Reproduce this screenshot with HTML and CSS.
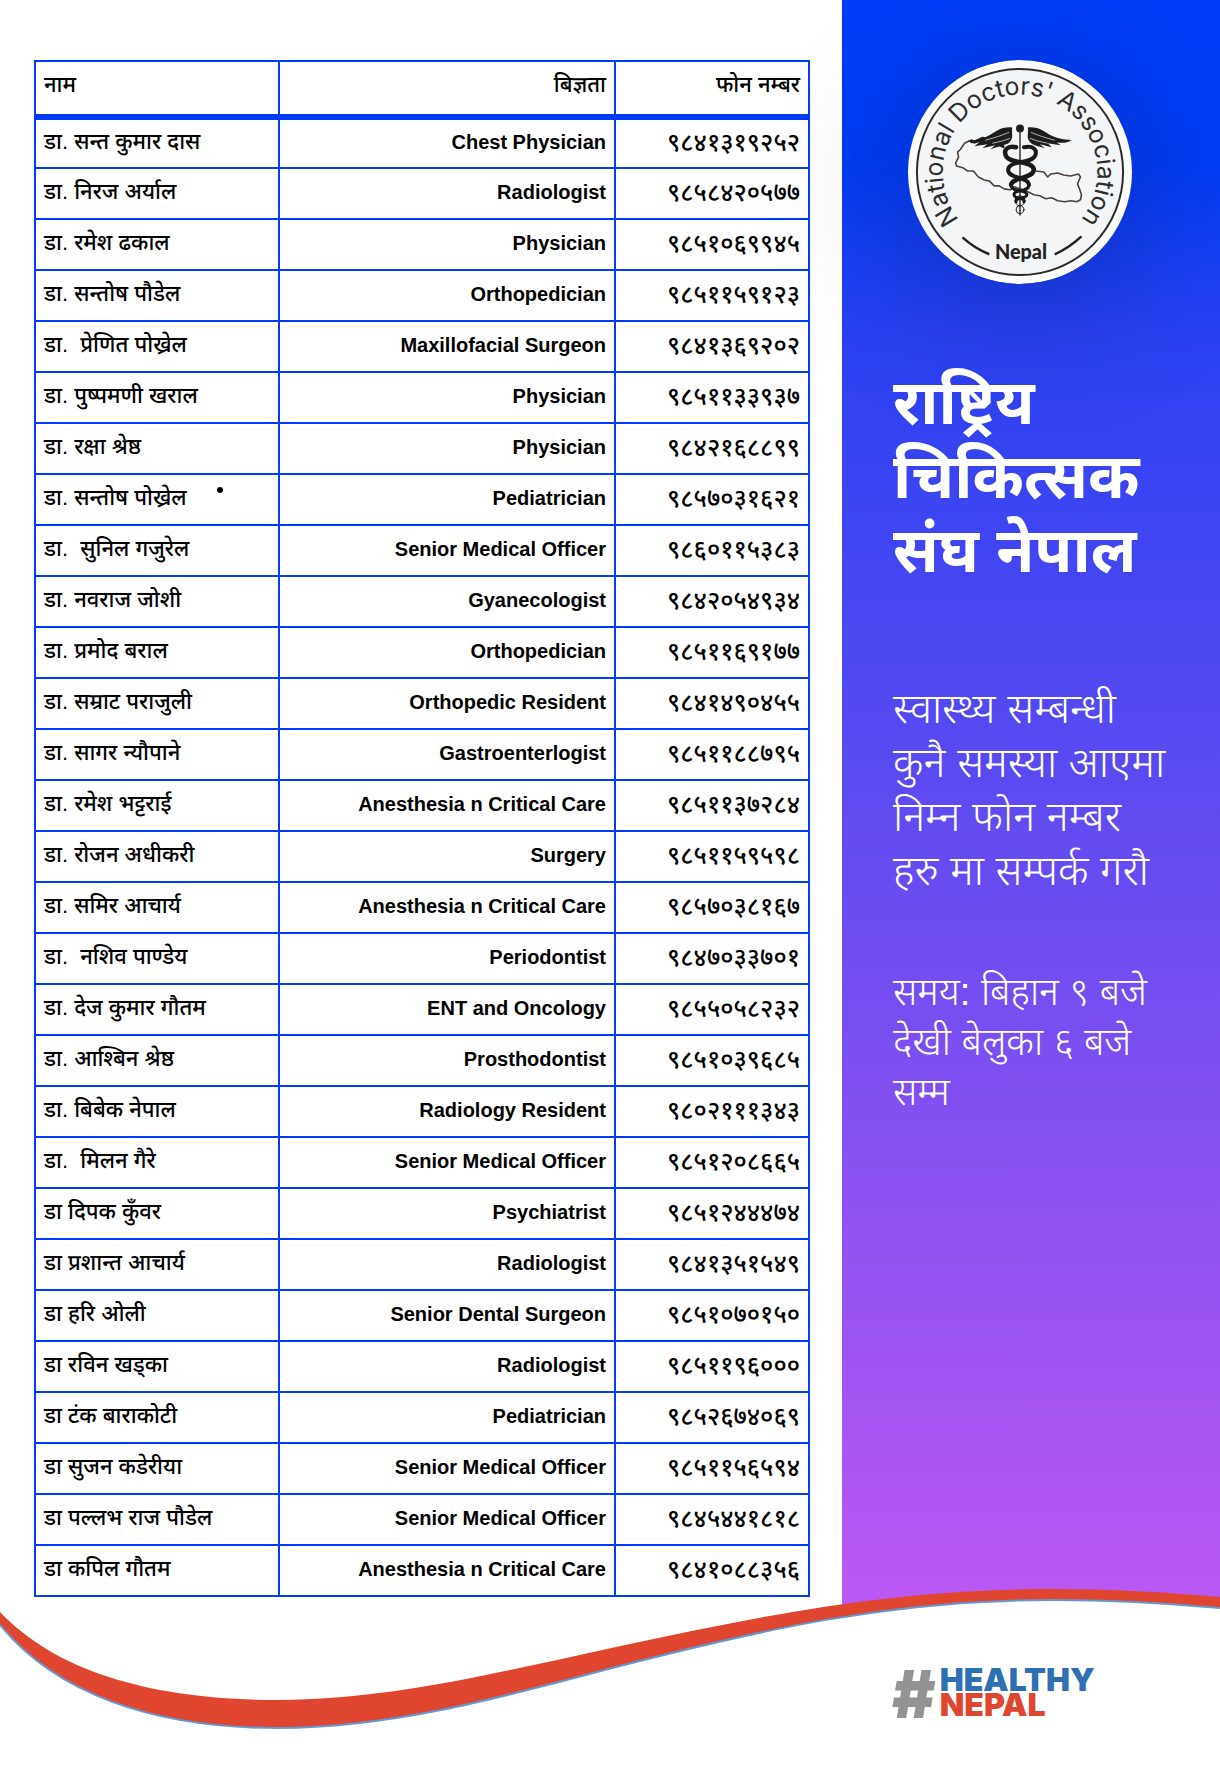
FILE: index.html
```html
<!DOCTYPE html>
<html lang="hi">
<head>
<meta charset="utf-8">
<meta name="viewport" content="width=device-width, initial-scale=1">
<title>राष्ट्रिय चिकित्सक संघ नेपाल</title>
<link rel="stylesheet" href="styles.css">
</head>
<body>
<div class="poster">
  <main class="directory">
    <table class="doctors">
      <colgroup><col class="col-name"><col><col class="col-phone"></colgroup>
      <thead>
        <tr><th scope="col">नाम</th><th scope="col">बिज्ञता</th><th scope="col">फोन नम्बर</th></tr>
      </thead>
      <tbody>
        <tr><td>डा. सन्त कुमार दास</td><td>Chest Physician</td><td>९८४१३१९२५२</td></tr>
        <tr><td>डा. निरज अर्याल</td><td>Radiologist</td><td>९८५८४२०५७७</td></tr>
        <tr><td>डा. रमेश ढकाल</td><td>Physician</td><td>९८५१०६९९४५</td></tr>
        <tr><td>डा. सन्तोष पौडेल</td><td>Orthopedician</td><td>९८५११५९१२३</td></tr>
        <tr><td>डा.&nbsp; प्रेणित पोख्रेल</td><td>Maxillofacial Surgeon</td><td>९८४१३६९२०२</td></tr>
        <tr><td>डा. पुष्पमणी खराल</td><td>Physician</td><td>९८५११३३९३७</td></tr>
        <tr><td>डा. रक्षा श्रेष्ठ</td><td>Physician</td><td>९८४२१६८८९९</td></tr>
        <tr><td>डा. सन्तोष पोख्रेल<span class="dot"></span></td><td>Pediatrician</td><td>९८५७०३१६२१</td></tr>
        <tr><td>डा.&nbsp; सुनिल गजुरेल</td><td>Senior Medical Officer</td><td>९८६०११५३८३</td></tr>
        <tr><td>डा. नवराज जोशी</td><td>Gyanecologist</td><td>९८४२०५४९३४</td></tr>
        <tr><td>डा. प्रमोद बराल</td><td>Orthopedician</td><td>९८५११६९१७७</td></tr>
        <tr><td>डा. सम्राट पराजुली</td><td>Orthopedic Resident</td><td>९८४१४९०४५५</td></tr>
        <tr><td>डा. सागर न्यौपाने</td><td>Gastroenterlogist</td><td>९८५११८८७९५</td></tr>
        <tr><td>डा. रमेश भट्टराई</td><td>Anesthesia n Critical Care</td><td>९८५११३७२८४</td></tr>
        <tr><td>डा. रोजन अधीकरी</td><td>Surgery</td><td>९८५११५९५९८</td></tr>
        <tr><td>डा. समिर आचार्य</td><td>Anesthesia n Critical Care</td><td>९८५७०३८१६७</td></tr>
        <tr><td>डा.&nbsp; नशिव पाण्डेय</td><td>Periodontist</td><td>९८४७०३३७०१</td></tr>
        <tr><td>डा. देज कुमार गौतम</td><td>ENT and Oncology</td><td>९८५५०५८२३२</td></tr>
        <tr><td>डा. आश्बिन श्रेष्ठ</td><td>Prosthodontist</td><td>९८५१०३९६८५</td></tr>
        <tr><td>डा. बिबेक नेपाल</td><td>Radiology Resident</td><td>९८०२१११३४३</td></tr>
        <tr><td>डा.&nbsp; मिलन गैरे</td><td>Senior Medical Officer</td><td>९८५१२०८६६५</td></tr>
        <tr><td>डा दिपक कुँवर</td><td>Psychiatrist</td><td>९८५१२४४४७४</td></tr>
        <tr><td>डा प्रशान्त आचार्य</td><td>Radiologist</td><td>९८४१३५१५४९</td></tr>
        <tr><td>डा हरि ओली</td><td>Senior Dental Surgeon</td><td>९८५१०७०१५०</td></tr>
        <tr><td>डा रविन खड्का</td><td>Radiologist</td><td>९८५११९६०००</td></tr>
        <tr><td>डा टंक बाराकोटी</td><td>Pediatrician</td><td>९८५२६७४०६९</td></tr>
        <tr><td>डा सुजन कडेरीया</td><td>Senior Medical Officer</td><td>९८५११५६५९४</td></tr>
        <tr><td>डा पल्लभ राज पौडेल</td><td>Senior Medical Officer</td><td>९८४५४४१८१८</td></tr>
        <tr><td>डा कपिल गौतम</td><td>Anesthesia n Critical Care</td><td>९८४१०८८३५६</td></tr>
      </tbody>
    </table>
  </main>

  <aside class="sidebar">
    <svg class="seal" viewBox="0 0 226 226" role="img" aria-label="National Doctors' Association, Nepal">
      <defs><path id="ring" d="M113 191 A78 78 0 1 1 113.1 191"/></defs>
      <circle cx="113" cy="113" r="113" fill="#fdfdfe"/>
      <circle cx="113" cy="113" r="104" fill="#f4f5f7" stroke="#2a2a2a" stroke-width="2"/>
      <text class="seal-ring"><textPath href="#ring" startOffset="50%">National Doctors' Association</textPath></text>
      <text class="seal-name" x="114" y="201">Nepal</text>
      <path d="M55 179 Q67 190 82 196 M148 196 Q162 190 175 178" fill="none" stroke="#222" stroke-width="2.5"/>
      <!-- outline of the country -->
      <path d="M63 81 L57 84 L53 90 L50 93 L51 98 L48 104 L49 107 L56 109 L60 112 L66 112 L71 118 L77 121 L82 122 L87 127 L92 127 L97 130 L103 131 L107 128 L113 130 L121 133 L127 136 L133 137 L139 140 L145 139 L151 142 L158 143 L165 142 L170 143 L174 141 L175 136 L173 130 L171 125 L174 118 L172 115 L164 117 L157 116 L151 114 L144 115 L141 118 L137 113 L129 112 L124 108" fill="none" stroke="#4b423f" stroke-width="1.6" stroke-linejoin="round"/>
      <path d="M63 81 L67 83 L75 79 L83 81 L90 84 L97 88" fill="none" stroke="#1d1d1d" stroke-width="3" stroke-linejoin="round"/>
      <!-- wings -->
      <g fill="#1d1d1d">
        <path d="M105 68 C94 67 89 72 82 76 C74 81 68 80 61 82 L64 84 L72 83 L67 87 L80 85 L75 89 L88 86 L83 90 L96 86 C103 85 106 80 105 74Z"/>
        <path d="M121 68 C132 67 137 72 144 76 C152 80 157 80 165 81 C160 84 155 84 150 83 L154 86 L141 84 L145 88 L133 85 L138 89 L128 86 C122 84 120 79 121 74Z"/>
      </g>
      <path d="M102 73 Q93 77 78 81 M103 79 Q96 82 85 84 M124 73 Q133 77 148 81 M123 79 Q130 82 141 84" fill="none" stroke="#d9dadc" stroke-width=".8"/>
      <circle cx="113" cy="69" r="4" fill="#1d1d1d"/>
      <path d="M113 72 V157" stroke="#333" stroke-width="1.5"/>
      <!-- entwined snakes -->
      <g fill="none" stroke="#1a1a1a" stroke-linecap="round">
        <path stroke-width="4.5" d="M109 88 C100 86 96 91 99 97 C103 105 127 101 127 111 C126 120 105 118 104 126"/>
        <path stroke-width="4" d="M117 88 C127 86 131 91 128 97 C124 105 101 101 101 111 C101 120 122 118 122 126"/>
        <path stroke-width="3" d="M104 126 C104 134 120 130 120 136 C119 141 108 138 109 143"/>
        <path stroke-width="3" d="M122 126 C122 134 106 130 107 136 C107 141 118 138 117 143"/>
        <circle stroke-width="1" cx="113" cy="142" r="5"/>
        <circle stroke-width="1" cx="113" cy="151" r="4"/>
      </g>
    </svg>
    <h1>राष्ट्रिय<br>चिकित्सक<br>संघ नेपाल</h1>
    <p class="notice">स्वास्थ्य सम्बन्धी<br>कुनै समस्या आएमा<br>निम्न फोन नम्बर<br>हरु मा सम्पर्क गरौ</p>
    <p class="hours">समय: बिहान ९ बजे<br>देखी बेलुका ६ बजे<br>सम्म</p>
  </aside>
</div>

<footer class="footer">
  <svg class="wave" viewBox="0 0 1220 186" preserveAspectRatio="none" aria-hidden="true">
    <path fill="#fff" d="M0 45 C55 112 150 148 278 148 C390 148 500 118 616 87 C760 50 890 20 1053 20 C1110 20 1165 23 1220 28 V186 H0Z"/>
    <path fill="#e0452f" d="M0 32 C60 95 160 120 278 120 C390 120 500 92 616 67 C760 36 890 9 1053 9 C1110 9 1165 12 1220 17 V28 C1165 23 1110 20 1053 20 C890 20 760 50 616 87 C500 118 390 148 278 148 C150 148 55 112 0 45Z"/>
    <path fill="none" stroke="#6598d0" stroke-width="2" d="M0 45 C55 112 150 148 278 148 C390 148 500 118 616 87 C760 50 890 20 1053 20 C1110 20 1165 23 1220 28"/>
  </svg>
  <div class="campaign">
    <span class="hash">#</span>
    <span class="words"><span class="healthy">HEALTHY</span><span class="nepal">NEPAL</span></span>
  </div>
</footer>
</body>
</html>
```
FILE: styles.css
```css
* { box-sizing: border-box; }

body {
  margin: 0;
  background: #fff;
  color: #000;
  font-family: "Liberation Sans", "Noto Sans Devanagari", "Noto Sans", sans-serif;
}

.poster {
  display: grid;
  grid-template-columns: minmax(0, 1fr) 378px;
}

.directory { padding: 60px 32px 10px 34px; }

.doctors {
  width: 100%;
  table-layout: fixed;
  border-collapse: collapse;
  font-size: 22px;
  line-height: 24px;
}
.col-name { width: 244px; }
.col-phone { width: 194px; }

.doctors th,
.doctors td {
  height: 51px;
  padding: 0 8px 3px;
  border: 2px solid #003cff;
  text-align: right;
  font-weight: 500;
  white-space: nowrap;
}
.doctors th {
  height: 56px;
  padding-bottom: 7px;
  border-bottom-width: 6px;
}
.doctors th:first-child,
.doctors td:first-child { text-align: left; }
.doctors td:nth-child(2) {
  font-size: 20px;
  font-weight: 700;
}
.doctors td:nth-child(3) { font-size: 25px; }

.dot {
  display: inline-block;
  width: 6px;
  height: 6px;
  margin-left: 30px;
  border-radius: 50%;
  background: #000;
  vertical-align: 12px;
}

.sidebar {
  display: flex;
  flex-direction: column;
  padding: 60px 0 0 51px;
  background: linear-gradient(#003cf8 0, #003cf5 160px, #2a41f2 340px, #4e48f1 660px, #8650f0 1140px, #ba58f3 1600px);
  color: #fff;
}
.seal {
  width: 226px;
  height: 224px;
  margin-left: 14px;
  border-radius: 50%;
  box-shadow: 0 20px 140px rgba(0, 0, 0, .25);
}
.seal-ring {
  font: 400 25px Inter, sans-serif;
  text-anchor: middle;
  fill: #2b2b2b;
}
.seal-name {
  font: 900 20px Lato, sans-serif;
  text-anchor: middle;
  fill: #222;
}

h1 {
  margin: 82px 0 0;
  font-size: 62px;
  font-weight: 700;
  line-height: 74px;
}
.notice {
  margin: 94px 0 0;
  font-size: 42px;
  font-weight: 300;
  line-height: 54px;
}
.hours {
  margin: 69px 0 0;
  font-size: 38px;
  font-weight: 300;
  line-height: 50px;
}

.footer {
  display: grid;
  grid-template-columns: minmax(0, 1fr) 328px;
  margin-top: -27px;
}
.wave {
  grid-area: 1 / 1 / 2 / 3;
  width: 100%;
  height: 186px;
}
.campaign {
  grid-area: 1 / 2 / 2 / 3;
  display: flex;
  gap: 4px;
  padding-top: 87px;
  font-family: Inter, sans-serif;
  font-weight: 900;
}
.hash {
  color: #939393;
  font-size: 66px;
  line-height: 54px;
}
.words {
  display: flex;
  flex-direction: column;
  font-size: 32px;
  line-height: 25px;
}
.healthy { color: #2e70b2; }
.nepal { color: #e0452f; }
```
